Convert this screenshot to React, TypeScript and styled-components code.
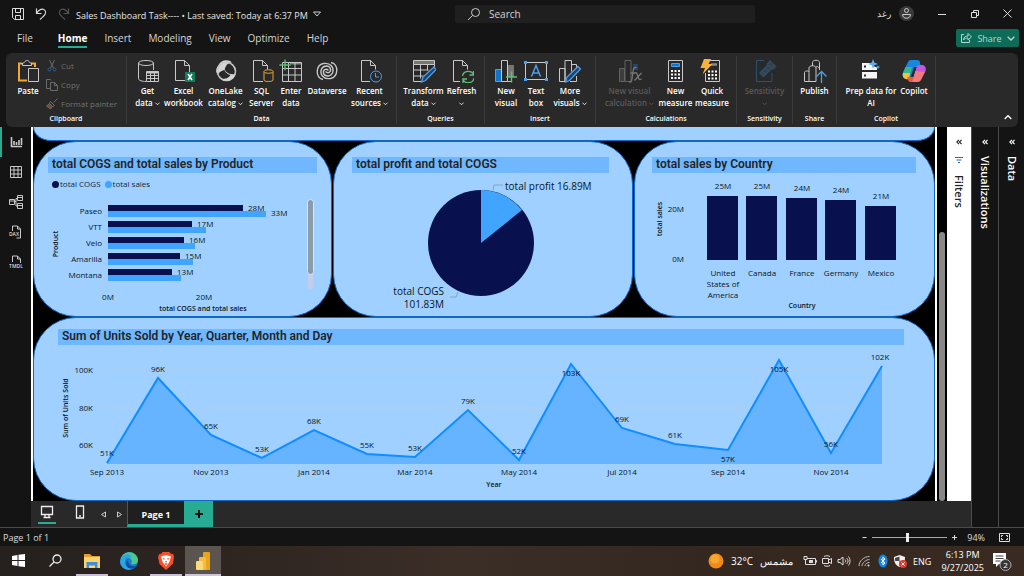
import React from 'react';
import styled, { createGlobalStyle, css } from 'styled-components';

const teal = '#27ab92';
const uiFont = `'Open Sans', 'Noto Sans', sans-serif`;

const GlobalStyle = createGlobalStyle`
  *, *::before, *::after { box-sizing: border-box; }
  body { margin: 0; background: #141414; color: #fff; font-family: ${uiFont}; font-size: 10px; }
  button, input { font: inherit; color: inherit; }
  svg { display: block; }
`;

const bareButton = css`
  border: 0;
  padding: 0;
  margin: 0;
  background: none;
  cursor: pointer;
`;

const Window = styled.div`
  display: flex;
  flex-direction: column;
  min-height: 100vh;
`;

/* ---------- title bar ---------- */

const TitleBar = styled.header`
  display: grid;
  grid-template-columns: 442fr 300px 255fr;
  column-gap: 2px;
  height: 27px;
  align-items: center;
  padding: 0 12px 0 11px;
`;

const FileSide = styled.div`
  display: flex;
  align-items: center;
  gap: 5px;
  white-space: nowrap;
`;

const QuickAccess = styled.div`
  display: flex;
  gap: 9px;
`;

const AccountSide = styled.div`
  display: flex;
  align-items: center;
  justify-content: flex-end;
  gap: 23px;
`;

const IconButton = styled.button`
  ${bareButton}
  display: grid;
  place-items: center;
  flex: none;
`;

const FileName = styled.span`
  font-size: 9px;
  line-height: 12px;
  color: #e6e6e6;
  padding-top: 4px;
`;

const SearchBox = styled.label`
  display: flex;
  align-items: center;
  gap: 8px;
  height: 18px;
  padding: 0 12px;
  background: #1f1f1f;
  border-radius: 2px;
`;

const SearchInput = styled.input`
  flex: 1;
  min-width: 0;
  border: 0;
  outline: 0;
  padding: 0;
  background: none;
  font-size: 10px;
  &::placeholder { color: #d4d4d4; opacity: 1; }
`;

const Account = styled.div`
  display: flex;
  align-items: center;
  gap: 8px;
  font-size: 9px;
  color: #ddd;
`;

/* ---------- menu ---------- */

const MenuBar = styled.div`
  display: flex;
  align-items: center;
  justify-content: space-between;
  height: 26px;
  padding: 0 5px 2px 17px;
`;

const MenuItems = styled.nav`
  display: flex;
  gap: 17px;
`;

const MenuItem = styled.button<{ $active?: boolean }>`
  ${bareButton}
  font-size: 10px;
  line-height: 16px;
  color: ${(p) => (p.$active ? '#fff' : '#d6d6d6')};
  font-weight: ${(p) => (p.$active ? 700 : 400)};
  border-bottom: 2px solid ${(p) => (p.$active ? teal : 'transparent')};
  &:first-child { margin-right: 8px; }
`;

const ShareButton = styled.button`
  ${bareButton}
  display: flex;
  align-items: center;
  justify-content: center;
  gap: 5px;
  width: 63px;
  height: 18px;
  margin-bottom: 2px;
  border-radius: 2px;
  background: #0d6b58;
  color: #b5d6cf;
  font-size: 9px;
`;

/* ---------- ribbon ---------- */

const Ribbon = styled.section`
  display: flex;
  height: 74px;
  margin: 0 6px;
  background: #292929;
  border-radius: 6px;
`;

const Group = styled.div<{ $width: number }>`
  display: flex;
  flex-direction: column;
  justify-content: space-between;
  align-items: center;
  width: ${(p) => p.$width}px;
  margin: 3px 0;
  border-right: 1px solid #3c3c3c;
`;

const GroupTools = styled.div`
  display: flex;
`;

const GroupName = styled.span`
  font-size: 7px;
  line-height: 10px;
  font-weight: 600;
`;

const Tool = styled.button<{ $width: number }>`
  ${bareButton}
  display: flex;
  flex-direction: column;
  align-items: center;
  gap: 2px;
  width: ${(p) => p.$width}px;
  padding-top: 3px;
  font-size: 8px;
  line-height: 12px;
  font-weight: 600;
  white-space: nowrap;
  &:disabled { color: #5a5a5a; }
`;

const ToolLine = styled.span`
  display: flex;
  align-items: center;
  justify-content: center;
  gap: 2px;
  height: 12px;
`;

const ClipList = styled.div`
  display: flex;
  flex-direction: column;
  padding-left: 5px;
`;

const ClipItem = styled.button`
  ${bareButton}
  display: flex;
  align-items: center;
  gap: 3px;
  height: 19px;
  font-size: 8px;
  white-space: nowrap;
  &:disabled { color: #727272; }
`;

const RibbonEnd = styled.div`
  flex: 1;
  display: flex;
  align-items: flex-end;
  justify-content: flex-end;
  padding: 0 6px 6px;
`;

/* ---------- workspace ---------- */

const Workspace = styled.div`
  display: flex;
  flex: 1;
`;

const Rail = styled.nav`
  width: 31px;
  flex: none;
`;

const RailButton = styled.button<{ $active?: boolean }>`
  ${bareButton}
  display: grid;
  place-items: center;
  width: 31px;
  height: 30px;
  padding-right: 2px;
  border-left: 2px solid ${(p) => (p.$active ? teal : 'transparent')};
`;

const RailText = styled.text`
  font: 600 5px ${uiFont};
  text-anchor: middle;
  fill: #ddd;
  stroke: none;
`;

const Middle = styled.div`
  display: flex;
  flex-direction: column;
  flex: 1;
  min-width: 0;
`;

const CanvasRow = styled.div`
  display: flex;
  flex: 1;
`;

const Dashboard = styled.main`
  flex: 1;
  min-width: 0;
  background: #000;
  border: solid #fff;
  border-width: 0 2px;
`;

const ScrollStrip = styled.div`
  display: flex;
  align-items: flex-end;
  justify-content: center;
  width: 10px;
  background: #000;
`;

const ScrollThumb = styled.div`
  width: 6px;
  height: 72%;
  border-radius: 3px;
  background: #8a8886;
`;

const cardSkin = css`
  background: #9fd0ff;
  border: 1px solid #1268c4;
`;

const TopCard = styled.div`
  ${cardSkin}
  height: 14px;
  border-top: 0;
  border-radius: 0 0 18px 18px / 0 0 14px 14px;
`;

const CardRow = styled.div`
  display: grid;
  grid-template-columns: 299fr 300fr 301fr;
  column-gap: 1px;
`;

const Card = styled.section<{ $top: number }>`
  ${cardSkin}
  border-radius: 43px;
  padding-top: ${(p) => p.$top}px;
  min-width: 0;
`;

const CardTitle = styled.h2<{ $left: number; $right: number }>`
  margin: 0 ${(p) => p.$right}px 0 ${(p) => p.$left}px;
  padding-left: 4px;
  height: 16px;
  background: #6fb8ff;
  color: #252423;
  font: 600 12px/15px Roboto, sans-serif;
  white-space: nowrap;
`;

const Legend = styled.div`
  display: flex;
  gap: 4px;
  margin: 5px 0 0 18px;
  font-size: 8px;
  line-height: 12px;
  color: #16263a;
`;

const LegendItem = styled.span<{ $color: string }>`
  display: flex;
  align-items: center;
  gap: 1px;
  &::before {
    content: '';
    width: 7px;
    height: 7px;
    border-radius: 50%;
    background: ${(p) => p.$color};
  }
`;

const Plot = styled.svg<{ $height: number }>`
  width: 100%;
  height: ${(p) => p.$height}px;
`;

const Mark = styled.text<{ $size?: number; $bold?: boolean; $anchor?: string }>`
  font-family: ${uiFont};
  font-size: ${(p) => p.$size ?? 8}px;
  font-weight: ${(p) => (p.$bold ? 600 : 400)};
  text-anchor: ${(p) => p.$anchor ?? 'middle'};
  fill: #0c1624;
`;

const Pane = styled.aside<{ $light?: boolean; $width: number }>`
  display: flex;
  flex-direction: column;
  align-items: center;
  width: ${(p) => p.$width}px;
  flex: none;
  padding-top: 12px;
  gap: 11px;
  background: ${(p) => (p.$light ? '#fff' : '#141414')};
  color: ${(p) => (p.$light ? '#252423' : '#fff')};
  border-left: ${(p) => (p.$light ? '0' : '1px solid #4a4a4a')};
`;

const PaneName = styled.span`
  writing-mode: vertical-rl;
  font-size: 11px;
  line-height: 16px;
  font-weight: 600;
`;

/* ---------- page tabs and status ---------- */

const TabBar = styled.div`
  display: flex;
  height: 26px;
  background: #292929;
`;

const ViewButton = styled.button<{ $active?: boolean }>`
  ${bareButton}
  width: 32px;
  display: flex;
  flex-direction: column;
  align-items: center;
  padding-top: 4px;
  gap: 3px;
  &::after {
    content: '';
    width: 18px;
    height: 2px;
    background: ${(p) => (p.$active ? teal : 'transparent')};
  }
`;

const StepButton = styled(IconButton)`
  width: 16px;
`;

const PageTab = styled.button`
  ${bareButton}
  width: 57px;
  padding-top: 3px;
  font-size: 9px;
  font-weight: 700;
  background: #1f1f1f;
  border-left: 1px solid #555;
  border-bottom: 3px solid ${teal};
`;

const AddTab = styled.button`
  ${bareButton}
  display: grid;
  place-items: center;
  width: 29px;
  background: ${teal};
`;

const StatusBar = styled.footer`
  display: flex;
  align-items: center;
  justify-content: space-between;
  height: 19px;
  padding: 0 14px 0 3px;
  border-top: 1px solid #4a4a4a;
  color: #ddd;
  font-size: 9px;
`;

const ZoomTools = styled.div`
  display: flex;
  align-items: center;
  gap: 5px;
`;

const ZoomRange = styled.input`
  appearance: none;
  width: 75px;
  height: 10px;
  margin: 0;
  background: linear-gradient(#aaa, #aaa) center / 100% 1px no-repeat;
  &::-webkit-slider-thumb {
    appearance: none;
    width: 3px;
    height: 9px;
    background: #eee;
  }
`;

const ZoomValue = styled.output`
  margin: 0 9px 0 5px;
`;

/* ---------- task bar ---------- */

const TaskBar = styled.div`
  display: flex;
  justify-content: space-between;
  height: 30px;
  background: linear-gradient(90deg, #26211e 0%, #2d2420 20%, #3b2e27 45%, #33271f 70%, #3a2b22 100%);
`;

const TaskSide = styled.div`
  display: flex;
  align-items: center;
`;

const TaskButton = styled.button<{ $open?: boolean; $active?: boolean }>`
  ${bareButton}
  display: grid;
  place-items: center;
  align-self: stretch;
  width: 36px;
  margin-right: 1px;
  padding-top: 1px;
  background: ${(p) => (p.$active ? '#5b544f' : 'transparent')};
  border-bottom: 2px solid transparent;
  border-image: ${(p) =>
    p.$active
      ? 'linear-gradient(#cfc6dc, #cfc6dc) 1'
      : p.$open
        ? 'linear-gradient(90deg, transparent 8%, #c9bfd8 8%, #c9bfd8 92%, transparent 92%) 1'
        : 'none'};
`;

const Weather = styled.div`
  display: flex;
  align-items: center;
  gap: 7px;
  font-size: 10px;
  margin-right: 10px;
`;

const Tray = styled.div`
  display: flex;
  align-items: center;
  gap: 4px;
`;

const Language = styled.span`
  font-size: 9px;
  margin: 0 10px 0 6px;
`;

const Clock = styled.time`
  font-size: 9px;
  line-height: 13px;
  text-align: center;
  margin-right: 8px;
`;

const Notices = styled(IconButton)`
  margin-right: 12px;
`;

const BadgeText = styled.text`
  font: 400 8px ${uiFont};
  text-anchor: middle;
  fill: #fff;
`;

/* ---------- icons ---------- */

type IconProps = { size?: number; w?: number; color?: string; sw?: number; children: React.ReactNode; box?: string };
const Icon = ({ size = 24, w, color = '#c8c8c8', sw = 1, box = '0 0 24 24', children }: IconProps) => (
  <svg width={w ?? size} height={size} viewBox={box} fill="none" stroke={color} strokeWidth={sw} aria-hidden="true">
    {children}
  </svg>
);

const Chevron = ({ up, size = 5 }: { up?: boolean; size?: number }) => (
  <svg width={size} height={size} viewBox="0 0 6 6" fill="none" stroke="currentColor" strokeWidth="1" aria-hidden="true">
    <path d={up ? 'M.5 4.5 3 2l2.5 2.5' : 'M.5 2 3 4.5 5.5 2'} />
  </svg>
);

const Collapse = () => (
  <svg width="6" height="6" viewBox="0 0 7 7" fill="none" stroke="currentColor" strokeWidth="1.3" aria-hidden="true">
    <path d="M3.5 1 1 3.5 3.5 6M6.5 1 4 3.5 6.5 6" />
  </svg>
);

const sheet = 'M3.5 1.5h9l5 5v15h-14zM12.5 1.5v5h5';
const blue = '#4f9ee8';

const icons = {
  paste: (
    <Icon>
      <path d="M6 4.5H3v17h8M15 4.5h4V8" stroke="#f0a830" strokeWidth="2" />
      <path d="M6.5 6.5V4s2 0 2.2-1c.5-2 4-2 4.6 0 .2 1 2.2 1 2.2 1v2.5zM12.5 9.5h10v13h-10z" fill="#292929" />
    </Icon>
  ),
  getData: (
    <Icon>
      <ellipse cx="10" cy="4" rx="7.5" ry="2.5" />
      <path d="M2.5 4v15.5c0 2 4 3 7.5 3M17.5 4v7" />
      <path d="M10.5 12.5h12v10h-12zM10.5 16.5h12M10.5 19.5h12M14.5 14v8.5M18.5 14v8.5" />
      <path d="M11 13.5h11" strokeWidth="2" />
    </Icon>
  ),
  excel: (
    <Icon>
      <path d={sheet} />
      <path d="M13 13h10v10H13z" fill="#107c5a" stroke="none" />
      <path d="m16 15 4 6M20 15l-4 6" stroke="#fff" strokeWidth="1.5" />
    </Icon>
  ),
  oneLake: (
    <Icon>
      <path d="M4.5 6C7 0 15 0 18 3.5c-4-.5-6.5 3.5-7.5 7.5-3 .5-6 2.5-6.5 5C1 13 2 9 4.5 6z" fill="#d5d5d5" stroke="none" />
      <circle cx="12.5" cy="12.5" r="9" strokeWidth="1.5" />
      <path d="M10.5 8c0 5 4 8 11 7-2 6-8 8.5-14 5 4 0 7-1 9-4-4-1-7-4-6-8z" fill="#d5d5d5" stroke="none" />
    </Icon>
  ),
  sql: (
    <Icon>
      <path d="M13 22.5H3.5v-21h9l5 5v4M12.5 1.5v5h5" />
      <g stroke="#e8a93c" fill="#292929">
        <path d="M14 12.5V21c0 2 9 2 9 0v-8.5" />
        <ellipse cx="18.5" cy="12.5" rx="4.5" ry="1.8" />
      </g>
    </Icon>
  ),
  enter: (
    <Icon>
      <path d="M3.5 3.5h19v19h-19zM3.5 9.5h19M3.5 16h19M9.5 3.5v19M16 3.5v19" />
      <path d="M11 4.5h11" strokeWidth="2" opacity=".6" />
      <path d="M6 .5v11M.5 6h11" stroke="#5fbf77" strokeWidth="1.3" />
    </Icon>
  ),
  dataverse: (
    <Icon sw={1.4}>
      <path d="M8 20.5C0 19 .5 6 8.5 4.5c7-1 11 4 9 9.5-2 4-8 4-9 0-.8-3 2.5-5 5-2.5" />
      <path d="M16 3.5c8 1.5 7.5 14.5-.5 16-7 1-11-4-9-9.5 2-4 8-4 9 0 .8 3-2.5 5-5 2.5" />
    </Icon>
  ),
  recent: (
    <Icon>
      <path d="M12 22.5H3.5v-21h9l5 5v4M12.5 1.5v5h5" />
      <circle cx="18" cy="17.5" r="5.5" stroke={blue} />
      <path d="M17.5 14v4H21" stroke={blue} />
    </Icon>
  ),
  transform: (
    <Icon>
      <path d="M1.5 1.5h21v4h-21z" fill="#77756f" />
      <path d="M1.5 5.5v17h8M1.5 11h15M1.5 17h10M8.5 5.5v14M15.5 5.5v6M22.5 5.5v3" />
      <path d="m9.5 23 1.5-5L22 8l2 2.500-10.500 11z" stroke={blue} fill="#1d456c" strokeWidth="1.3" />
    </Icon>
  ),
  refresh: (
    <Icon>
      <path d="M10 22.5H3.5v-21h9l5 5v4M12.5 1.5v5h5" />
      <path d="M12.5 17c1-6 9-6 11-1.500M23.5 12v4h-4M24 19c-1 6-9 6-11 1.500M13 24v-4h4" stroke="#5fbf77" strokeWidth="1.3" />
    </Icon>
  ),
  newVisual: (
    <Icon>
      <path d="M14 6h6v12h-6z" fill="#77756f" stroke="none" />
      <path d="M1.5 10.5h6v12h-6z" fill="#1173c9" stroke={blue} />
      <path d="M7.5 1.5h6v21h-6z" />
      <path d="M13.5 22.5H17" />
      <path d="M17.5 12.5v11M12 18h11" stroke="#5fbf77" strokeWidth="1.4" />
    </Icon>
  ),
  textBox: (
    <Icon>
      <path d="M1.5 3.5h21v17h-21z" />
      <path d="m7.5 17.5 4.5-11 4.5 11M9 14h6" stroke={blue} strokeWidth="1.5" />
      <path d="M0 2h3v3H0zM21 2h3v3h-3zM0 19h3v3H0zM21 19h3v3h-3z" fill={blue} stroke="none" />
    </Icon>
  ),
  moreVisuals: (
    <Icon>
      <path d="M1.5 9.5H7v13H1.5zM7 22.5v-21h6.5v11M13.5 5.5h5v4M18.5 17v5.5H12" />
      <path d="m7.5 23 1.5-5L20 7.5l2.5 2.5-11 11.5z" stroke={blue} fill="#1d456c" strokeWidth="1.3" />
    </Icon>
  ),
  visualCalc: (
    <Icon color="#626262">
      <path d="M1.5 9.5h5v13h-5z" fill="#3d3d3d" />
      <path d="M7 1.5h6v21H7z" />
      <path d="M15 5h5v6h-5z" fill="#24446b" stroke="none" />
      <path d="M18.5 9c-2-1.500-3 0-3.200 2l-1.500 10c-.3 2-1.500 2.500-3 1.500M12.5 14h5M17 14c2-1 2 1 3 4s2 3 3.5 2M23.5 14l-7 7.5" strokeWidth="1.3" stroke="#777" />
    </Icon>
  ),
  newMeasure: (
    <Icon>
      <path d="M4.500 1.5h14v21h-14z" />
      <path d="M7.500 4.5h8v3h-8z" fill="#1173c9" stroke={blue} />
      <path d="M7 12h2M10.500 12h2M14 12h2M7 15.5h2M10.500 15.5h2M14 15.5h2M7 19h2M10.500 19h2M14 19h2" stroke="#fff" strokeWidth="2" />
    </Icon>
  ),
  quick: (
    <Icon>
      <path d="M10 1.5h9.5v21h-14V14" />
      <path d="M11 5.5h6" strokeWidth="2.5" stroke="#888" />
      <path d="M8 12.5h2M11.5 12.5h2M15 12.5h2M8 16h2M11.5 16h2M15 16h2M8 19.5h2M11.5 19.5h2M15 19.5h2" stroke="#fff" strokeWidth="2" />
      <path d="M4 0h7L8.5 5h4l-10 10.5L5 9H.5z" fill="#f7b23b" stroke="none" />
    </Icon>
  ),
  sensitivity: (
    <Icon color="#2c516f">
      <path d="M11 1.5H3.5v21H19V14" />
      <path d="m7 14 8-8 3.5 3.5-8 8zM9 12l3.5 3.5M12 9l3.5 3.5" strokeWidth="1.3" fill="#33414d" />
      <path d="m14 5 3-3.500 6 6-3 3zM17.5 2l-2 3M22 6l-3 2.5" fill="#33414d" />
    </Icon>
  ),
  publish: (
    <Icon>
      <path d="M13 22.5H1.5v-9c0-2 4.5-2 4.5 0v9M6 13V9c0-3 7-3 7 0v13.5M9.5 7V3.5c0-3 7-3 7 0V11M13 8c2-1 3 0 3.5 2" />
      <path d="M18.5 24V13M13.5 17.5l5-5 5 5" stroke={blue} strokeWidth="1.3" />
    </Icon>
  ),
  prep: (
    <Icon>
      <path d="M3 4h9l2 3 4 1.500V11H3zM3 13h15v6.500H3z" fill="#f5f5f5" stroke="none" />
      <path d="M5 7.5h2M5 16.5h2" stroke="#292929" strokeWidth="2" />
      <path d="m14 0 1.300 3.500L19 5l-3.700 1.300L14 10l-1.300-3.700L9 5l3.700-1.500zM19 6l.6 1.500 1.700.6-1.700.6-.6 1.800-.6-1.800-1.700-.6 1.700-.6z" fill="#5cb0f5" stroke="none" />
    </Icon>
  ),
  copilot: (
    <Icon>
      <g stroke="none">
        <path d="M6 3c1-2 2-2 4-2h5c2 0 3 1 3 3l1 4h-7L9 17c-1 3-2 3-5 3-3-1-4-4-3-7z" fill="#1687dc" />
        <path d="M3.5 8H10L7 19c-2 2-6 0-6.500-3z" fill="#35b88a" />
        <path d="M1 14h7l-1 6c-4 1-7-1-6-6z" fill="#f5c13d" />
        <path d="M18 21c-1 2-2 2-4 2H9c-2 0-3-1-3-3l-.5-2h6L15 7c1-1 3-1 5-1 3 0 4.500 3 3.500 6z" fill="#c25ae0" />
        <path d="m13.500 12 9.500 1-4 8c-1 2-3 2-5 2h-4z" fill="#f27c7c" />
        <path d="M5.500 18H12l-2 5c-3 0-3.500-1-4-3z" fill="#ef5b35" />
      </g>
    </Icon>
  ),
};

/* ---------- ribbon content ---------- */

type ToolSpec = { icon: React.ReactNode; width: number; lines: string[]; menu?: boolean; off?: boolean };

const groups: { name: string; width: number; tools: ToolSpec[] }[] = [
  {
    name: 'Data',
    width: 270,
    tools: [
      { icon: icons.getData, width: 32, lines: ['Get', 'data'], menu: true },
      { icon: icons.excel, width: 40, lines: ['Excel', 'workbook'] },
      { icon: icons.oneLake, width: 44, lines: ['OneLake', 'catalog'], menu: true },
      { icon: icons.sql, width: 28, lines: ['SQL', 'Server'] },
      { icon: icons.enter, width: 31, lines: ['Enter', 'data'] },
      { icon: icons.dataverse, width: 41, lines: ['Dataverse'] },
      { icon: icons.recent, width: 44, lines: ['Recent', 'sources'], menu: true },
    ],
  },
  {
    name: 'Queries',
    width: 88,
    tools: [
      { icon: icons.transform, width: 42, lines: ['Transform', 'data'], menu: true },
      { icon: icons.refresh, width: 34, lines: ['Refresh', ''], menu: true },
    ],
  },
  {
    name: 'Insert',
    width: 111,
    tools: [
      { icon: icons.newVisual, width: 28, lines: ['New', 'visual'] },
      { icon: icons.textBox, width: 32, lines: ['Text', 'box'] },
      { icon: icons.moreVisuals, width: 36, lines: ['More', 'visuals'], menu: true },
    ],
  },
  {
    name: 'Calculations',
    width: 141,
    tools: [
      { icon: icons.visualCalc, width: 56, lines: ['New visual', 'calculation'], menu: true, off: true },
      { icon: icons.newMeasure, width: 36, lines: ['New', 'measure'] },
      { icon: icons.quick, width: 37, lines: ['Quick', 'measure'] },
    ],
  },
  {
    name: 'Sensitivity',
    width: 56,
    tools: [{ icon: icons.sensitivity, width: 50, lines: ['Sensitivity', ''], menu: true, off: true }],
  },
  { name: 'Share', width: 44, tools: [{ icon: icons.publish, width: 40, lines: ['Publish'] }] },
  {
    name: 'Copilot',
    width: 99,
    tools: [
      { icon: icons.prep, width: 56, lines: ['Prep data for', 'AI'] },
      { icon: icons.copilot, width: 30, lines: ['Copilot'] },
    ],
  },
];

const RibbonTool = ({ tool }: { tool: ToolSpec }) => (
  <Tool $width={tool.width} disabled={tool.off}>
    {tool.icon}
    <span>
      {tool.lines.map((line, i) => (
        <ToolLine key={line}>
          {line}
          {tool.menu && i === tool.lines.length - 1 && <Chevron />}
        </ToolLine>
      ))}
    </span>
  </Tool>
);

/* ---------- charts ---------- */

const navy = '#08104e';
const sky = '#41a4ff';
const gridLine = '#b4cfe6';

const products = [
  { name: 'Paseo', cogs: 28.1, sales: 33, label: '28M' },
  { name: 'VTT', cogs: 17.5, sales: 20.4, label: '17M' },
  { name: 'Velo', cogs: 15.9, sales: 18.2, label: '16M' },
  { name: 'Amarilla', cogs: 15, sales: 17.7, label: '15M' },
  { name: 'Montana', cogs: 13.3, sales: 15.3, label: '13M' },
];

const ProductChart = () => {
  const x0 = 74;
  const perMillion = 4.79;
  return (
    <Plot $height={126} viewBox="0 0 297 126" role="img" aria-label="total COGS and total sales by Product">
      <path d="M74.5 10v86M169.5 10v86" stroke={gridLine} strokeDasharray="1 3" />
      {products.map((p, i) => {
        const y = 15 + i * 16;
        return (
          <g key={p.name}>
            <rect x={x0} y={y} width={Math.round(p.cogs * perMillion)} height={6} fill={navy} />
            <rect x={x0} y={y + 6} width={Math.round(p.sales * perMillion)} height={6} fill={sky} />
            <Mark x={68} y={y + 9} $anchor="end">{p.name}</Mark>
            <Mark x={x0 + Math.round(p.cogs * perMillion) + 5} y={y + 6} $anchor="start">{p.label}</Mark>
          </g>
        );
      })}
      <Mark x={237} y={26} $anchor="start">33M</Mark>
      <Mark x={74} y={110}>0M</Mark>
      <Mark x={170} y={110}>20M</Mark>
      <Mark x={169} y={121} $size={7} $bold>total COGS and total sales</Mark>
      <Mark transform="translate(24 54) rotate(-90)" $size={7} $bold>Product</Mark>
      <rect x="274" y="80" width="5" height="19" rx="2" fill="#c3cdec" />
      <rect x="273.5" y="9.5" width="6" height="75" rx="3" fill="#8d9ba8" stroke="#d7e6f5" />
    </Plot>
  );
};

const ProfitChart = () => (
  <Plot $height={143} viewBox="0 0 298 143" role="img" aria-label="total profit and total COGS">
    <circle cx="147" cy="70" r="53" fill={navy} />
    <path d="M147 70V17a53 53 0 0 1 41 20z" fill={sky} />
    <path d="M159 17l1-5h9M116 124h6l2-5" fill="none" stroke="#8aa6c0" />
    <Mark x={171} y={17} $size={10} $anchor="start">total profit 16.89M</Mark>
    <Mark x={110} y={122} $size={10} $anchor="end">total COGS</Mark>
    <Mark x={110} y={135} $size={10} $anchor="end">101.83M</Mark>
  </Plot>
);

const countries = [
  { lines: ['United', 'States of', 'America'], label: '25M', h: 64 },
  { lines: ['Canada'], label: '25M', h: 64 },
  { lines: ['France'], label: '24M', h: 62 },
  { lines: ['Germany'], label: '24M', h: 60 },
  { lines: ['Mexico'], label: '21M', h: 54 },
];

const CountryChart = () => (
  <Plot $height={143} viewBox="0 0 299 143" role="img" aria-label="total sales by Country">
    <path d="M57 36.5h220M57 86.5h220" stroke={gridLine} strokeDasharray="1 3" />
    {countries.map((c, i) => {
      const mid = 88 + Math.round(i * 39.4);
      return (
        <g key={c.lines[0]}>
          <rect x={mid - 16} y={87 - c.h} width={31} height={c.h} fill={navy} />
          <Mark x={mid} y={80 - c.h}>{c.label}</Mark>
          {c.lines.map((l, n) => (
            <Mark key={l} x={mid} y={103 + n * 11}>{l}</Mark>
          ))}
        </g>
      );
    })}
    <Mark x={49} y={39} $anchor="end">20M</Mark>
    <Mark x={49} y={89} $anchor="end">0M</Mark>
    <Mark x={167} y={135} $size={7} $bold>Country</Mark>
    <Mark transform="translate(27 46) rotate(-90)" $size={7} $bold>total sales</Mark>
  </Plot>
);

const units: { x: number; y: number; label: string; dy?: number; dx?: number }[] = [
  { x: 73, y: 118, label: '51K', dy: -7 },
  { x: 124, y: 33, label: '96K' },
  { x: 177, y: 90, label: '65K' },
  { x: 228, y: 113, label: '53K' },
  { x: 280, y: 85, label: '68K' },
  { x: 333, y: 109, label: '55K' },
  { x: 381, y: 112, label: '53K' },
  { x: 434, y: 65, label: '79K' },
  { x: 485, y: 115, label: '52K' },
  { x: 537, y: 19, label: '103K', dy: 12 },
  { x: 588, y: 83, label: '69K' },
  { x: 641, y: 99, label: '61K' },
  { x: 694, y: 105, label: '57K', dy: 12 },
  { x: 745, y: 15, label: '105K', dy: 12 },
  { x: 797, y: 108, label: '56K' },
  { x: 848, y: 21, label: '102K', dx: -2 },
];

const months = ['Sep 2013', 'Nov 2013', 'Jan 2014', 'Mar 2014', 'May 2014', 'Jul 2014', 'Sep 2014', 'Nov 2014'];

const UnitsChart = () => {
  const line = units.map((u) => `${u.x},${u.y}`).join(' ');
  return (
    <Plot $height={155} viewBox="0 0 900 155" role="img" aria-label="Sum of Units Sold by month">
      <path d="M66 25.5h784M66 63.5h784M66 100.5h784" stroke={gridLine} strokeDasharray="1 3" />
      {months.map((m, i) => (
        <path key={m} d={`M${units[i * 2].x} 8v111`} stroke={gridLine} strokeDasharray="1 3" />
      ))}
      <polygon points={`73,119 ${line} 848,119`} fill="#66b3ff" />
      <polyline points={line} fill="none" stroke="#118dff" strokeWidth="2" />
      {units.map((u) => (
        <Mark key={u.x} x={u.x + (u.dx ?? 0)} y={u.y + (u.dy ?? -6)}>{u.label}</Mark>
      ))}
      {months.map((m, i) => (
        <Mark key={m} x={units[i * 2].x} y={130}>{m}</Mark>
      ))}
      <Mark x={59} y={28} $anchor="end">100K</Mark>
      <Mark x={59} y={66} $anchor="end">80K</Mark>
      <Mark x={59} y={103} $anchor="end">60K</Mark>
      <Mark x={460} y={142} $size={7} $bold>Year</Mark>
      <Mark transform="translate(34 63) rotate(-90)" $size={7} $bold>Sum of Units Sold</Mark>
    </Plot>
  );
};

/* ---------- page ---------- */

export default function App() {
  return (
    <Window>
      <GlobalStyle />
      <TitleBar>
        <FileSide>
          <QuickAccess>
            <IconButton aria-label="Save">
              <Icon size={14} box="0 0 14 14" color="#ddd">
                <path d="M1.5 1.5h11v11h-9l-2-2zM4.5 1.5v4h5v-4M4.5 12.5v-4h5v4" />
              </Icon>
            </IconButton>
            <IconButton aria-label="Undo">
              <Icon size={14} box="0 0 14 14" color="#ddd" sw={1.2}>
                <path d="M2.5 1.5v5h5M2.5 6.5C5 2 9 1 11 3.5s0 4.5-5 9" />
              </Icon>
            </IconButton>
            <IconButton aria-label="Redo">
              <Icon size={14} box="0 0 14 14" color="#555" sw={1.2}>
                <path d="M11.5 1.5v5h-5M11.5 6.5C9 2 5 1 3 3.5s0 4.5 5 9" />
              </Icon>
            </IconButton>
          </QuickAccess>
          <FileName>Sales Dashboard Task---- • Last saved: Today at 6:37 PM</FileName>
          <IconButton aria-label="File details">
            <Icon size={6} w={8} box="0 0 8 6" color="#ccc">
              <path d="M.5 1h7L4 5z" />
            </Icon>
          </IconButton>
        </FileSide>
        <SearchBox>
          <Icon size={14} box="0 0 14 14" color="#ccc">
            <circle cx="8.5" cy="5.5" r="4" />
            <path d="M5.5 8.5 1 13" />
          </Icon>
          <SearchInput placeholder="Search" aria-label="Search" />
        </SearchBox>
        <AccountSide>
          <Account>
            <span lang="ar">رغد</span>
            <Icon size={15} box="0 0 15 15" color="#ccc">
              <circle cx="7.5" cy="7.5" r="7.5" fill="#3a3a3a" stroke="none" />
              <circle cx="7.5" cy="4.5" r="2" />
              <path d="M3.5 8.5h8c0 5-8 5-8 0z" />
            </Icon>
          </Account>
          <IconButton aria-label="Minimize">
            <Icon size={10} box="0 0 10 10" color="#ddd"><path d="M1 5.5h8" /></Icon>
          </IconButton>
          <IconButton aria-label="Restore">
            <Icon size={10} box="0 0 10 10" color="#ddd">
              <path d="M1.5 3.5h5v5h-5zM3.5 3.5v-2h5v5h-2" />
            </Icon>
          </IconButton>
          <IconButton aria-label="Close">
            <Icon size={9} box="0 0 9 9" color="#ddd"><path d="m.5.5 8 8M8.5.5l-8 8" /></Icon>
          </IconButton>
        </AccountSide>
      </TitleBar>

      <MenuBar>
        <MenuItems>
          {['File', 'Home', 'Insert', 'Modeling', 'View', 'Optimize', 'Help'].map((m) => (
            <MenuItem key={m} $active={m === 'Home'}>{m}</MenuItem>
          ))}
        </MenuItems>
        <ShareButton>
          <Icon size={12} box="0 0 12 12" color="#b5d6cf">
            <path d="M4 2.5H1.5v8h8V8M3.5 8c0-3 2-4 4.5-4V1.5L11.500 5 8 8V6C6 6 4.5 6.5 3.5 8z" />
          </Icon>
          Share
          <Chevron size={8} />
        </ShareButton>
      </MenuBar>

      <Ribbon>
        <Group $width={121}>
          <GroupTools>
            <Tool $width={26}>
              {icons.paste}
              Paste
            </Tool>
            <ClipList>
              <ClipItem disabled>
                <Icon size={12} box="0 0 12 12" color="#6b6b6b">
                  <path d="m3.5 0 4 8M8.5 0l-4 8" />
                  <circle cx="3.5" cy="9.5" r="1.5" stroke="#2f5f8c" />
                  <circle cx="8.5" cy="9.5" r="1.5" stroke="#2f5f8c" />
                </Icon>
                Cut
              </ClipItem>
              <ClipItem disabled>
                <Icon size={12} box="0 0 12 12" color="#6b6b6b">
                  <path d="M4 9.5H.5v-9h4l1 1M4.5 3.5h4l3 3v5h-7zM8.5 3.5v3h3" />
                </Icon>
                Copy
              </ClipItem>
              <ClipItem disabled>
                <Icon size={12} box="0 0 12 12" color="#6b6b6b">
                  <path d="m11.5.5-4 4M4.5 3.5l4 4-2 1-3-3z" />
                  <path d="M3.5 5.5.5 8l4 3 2-2.5z" fill="#7a4b35" />
                </Icon>
                Format painter
              </ClipItem>
            </ClipList>
          </GroupTools>
          <GroupName>Clipboard</GroupName>
        </Group>
        {groups.map((g) => (
          <Group key={g.name} $width={g.width}>
            <GroupTools>
              {g.tools.map((t) => (
                <RibbonTool key={t.lines.join(' ')} tool={t} />
              ))}
            </GroupTools>
            <GroupName>{g.name}</GroupName>
          </Group>
        ))}
        <RibbonEnd>
          <IconButton aria-label="Collapse ribbon"><Chevron up size={8} /></IconButton>
        </RibbonEnd>
      </Ribbon>

      <Workspace>
        <Rail>
          <RailButton $active aria-label="Report view">
            <Icon size={14} box="0 0 14 14">
              <path d="M2.500 2v9.500H13M5 10V6M7.500 10V7M10 10V5M12.500 10V3" strokeWidth="1.6" />
            </Icon>
          </RailButton>
          <RailButton aria-label="Table view">
            <Icon size={14} box="0 0 14 14">
              <path d="M1.5 1.5h11v11h-11zM1.5 5h11M1.5 9h11M5 1.5v11M9 1.5v11" />
            </Icon>
          </RailButton>
          <RailButton aria-label="Model view">
            <Icon size={14} box="0 0 14 14">
              <path d="M.5 4.5h5v5h-5zM.5 6h5M8.5.5h5v5h-5zM8.5 2.5h5M8.5 8.5h5v5h-5zM8.5 10.5h5M5.5 6.5H7v-3h1.500M7 6.5V11h1.500" />
            </Icon>
          </RailButton>
          <RailButton aria-label="DAX query view">
            <Icon size={14} box="0 0 14 14">
              <path d="M3.5 6V1h5l3 3v9h-4M8.5 1v3h3" />
              <RailText x="5" y="11">DAX</RailText>
            </Icon>
          </RailButton>
          <RailButton aria-label="TMDL view">
            <Icon size={14} box="0 0 14 14">
              <path d="M3.5 7V1h5l3 3v4M8.5 1v3h3" />
              <RailText x="7" y="13">TMDL</RailText>
            </Icon>
          </RailButton>
        </Rail>

        <Middle>
          <CanvasRow>
            <Dashboard>
              <TopCard />
              <CardRow>
                <Card $top={15}>
                  <CardTitle $left={14} $right={14}>total COGS and total sales by Product</CardTitle>
                  <Legend>
                    <LegendItem $color={navy}>total COGS</LegendItem>
                    <LegendItem $color={sky}>total sales</LegendItem>
                  </Legend>
                  <ProductChart />
                </Card>
                <Card $top={15}>
                  <CardTitle $left={18} $right={23}>total profit and total COGS</CardTitle>
                  <ProfitChart />
                </Card>
                <Card $top={15}>
                  <CardTitle $left={17} $right={18}>total sales by Country</CardTitle>
                  <CountryChart />
                </Card>
              </CardRow>
              <Card $top={11}>
                <CardTitle $left={24} $right={30}>Sum of Units Sold by Year, Quarter, Month and Day</CardTitle>
                <UnitsChart />
              </Card>
            </Dashboard>
            <ScrollStrip><ScrollThumb /></ScrollStrip>
            <Pane $light $width={24}>
              <Collapse />
              <Icon size={8} box="0 0 8 8" color="#2b6cb0"><path d="M0 1.5h8M1.5 4h5M3 6.5h2" /></Icon>
              <PaneName>Filters</PaneName>
            </Pane>
          </CanvasRow>
          <TabBar>
            <ViewButton $active aria-label="Desktop layout">
              <Icon size={14} box="0 0 14 14" color="#eee" sw={1.3}>
                <path d="M1.5 1.5h11v8h-11zM5 9.5v3M9 9.5v3M3.5 12.5h7" />
              </Icon>
            </ViewButton>
            <ViewButton aria-label="Mobile layout">
              <Icon size={14} box="0 0 14 14" color="#eee" sw={1.3}>
                <path d="M4.500 1h7v12h-7zM7 11h2" />
              </Icon>
            </ViewButton>
            <StepButton aria-label="Previous page">
              <Icon size={7} w={5} box="0 0 5 7" color="#ccc"><path d="M4.5 1v5l-4-2.5z" /></Icon>
            </StepButton>
            <StepButton aria-label="Next page">
              <Icon size={7} w={5} box="0 0 5 7" color="#ccc"><path d="M.5 1v5l4-2.5z" /></Icon>
            </StepButton>
            <PageTab>Page 1</PageTab>
            <AddTab aria-label="New page">
              <Icon size={8} box="0 0 8 8" color="#111" sw={2}><path d="M4 0v8M0 4h8" /></Icon>
            </AddTab>
          </TabBar>
        </Middle>

        <Pane $width={27}>
          <Collapse />
          <PaneName>Visualizations</PaneName>
        </Pane>
        <Pane $width={26}>
          <Collapse />
          <PaneName>Data</PaneName>
        </Pane>
      </Workspace>

      <StatusBar>
        <span>Page 1 of 1</span>
        <ZoomTools>
          <IconButton aria-label="Zoom out">
            <Icon size={5} box="0 0 5 5" color="#ddd"><path d="M.5 2.5h4" /></Icon>
          </IconButton>
          <ZoomRange type="range" min={10} max={188} defaultValue={94} aria-label="Zoom" />
          <IconButton aria-label="Zoom in">
            <Icon size={5} box="0 0 5 5" color="#ddd"><path d="M0 2.5h5M2.5 0v5" /></Icon>
          </IconButton>
          <ZoomValue>94%</ZoomValue>
          <IconButton aria-label="Fit to page">
            <Icon size={9} w={11} box="0 0 11 9" color="#ddd">
              <path d="M.5.5h10v8H.5zM2.5 4V2.5H4M7 2.5h1.5V4M8.5 5v1.5H7M4 6.5H2.5V5" />
            </Icon>
          </IconButton>
        </ZoomTools>
      </StatusBar>

      <TaskBar>
        <TaskSide>
          <TaskButton aria-label="Start">
            <Icon size={13} box="0 0 13 13" color="none">
              <path d="m0 2 5.5-1v5H0zM6.5.8 13 0v6H6.5zM0 7h5.5v5L0 11zM6.5 7H13v6l-6.5-.8z" fill="#fff" />
            </Icon>
          </TaskButton>
          <TaskButton aria-label="Search Windows">
            <Icon size={13} box="0 0 13 13" color="#eee" sw={1.3}>
              <circle cx="8" cy="5" r="4" />
              <path d="M5 8 .5 12.5" />
            </Icon>
          </TaskButton>
          <TaskButton $open aria-label="File Explorer">
            <Icon size={16} w={18} box="0 0 18 16" color="none">
              <path d="M1 1h6l2 2h8v12H1z" fill="#e0a12e" />
              <path d="M1 4h16v11H1z" fill="#fcd46c" />
              <path d="M3.5 9h11v6H12v-2.5H6V15H3.5z" fill="#3f8ede" />
            </Icon>
          </TaskButton>
          <TaskButton aria-label="Edge">
            <Icon size={18} box="0 0 18 18" color="none">
              <circle cx="9" cy="9" r="9" fill="#1a7fd0" />
              <path d="M1 7C3-2 17-2 18 8c0 4-4 5-7 4 3-5-3-9-10-5z" fill="#4dc790" />
              <path d="M1 7c3-6 10-6 11-1-4-2-7 0-7 4 0 5 5 7 10 5-5 5-14 3-15-5z" fill="#2da4e4" />
              <path d="M8 8c-5 4 0 11 7 8 2-1 2-3 0-2-4 1-7-2-7-6z" fill="#0f4f9c" />
            </Icon>
          </TaskButton>
          <TaskButton $open aria-label="Brave">
            <Icon size={18} w={16} box="0 0 16 18" color="none">
              <path d="M4.5 0h7L13 2l2-.2 1 3-1 7L8 18l-6.500-6L0 5l1.200-3L3 2z" fill="#f4502a" />
              <path d="M3 4.5 8 3l5 1.500-1.500 5L10 12l-2 2.500L6 12 4.500 9.500z" fill="#fff" />
              <path d="m4.500 6 2.500.5-1 1.500zM11.500 6 9 6.500l1 1.500zM7 9h2l-1 2zM6 12l2-1 2 1-2 1z" fill="#f4502a" />
            </Icon>
          </TaskButton>
          <TaskButton $active aria-label="Power BI">
            <Icon size={18} w={16} box="0 0 16 18" color="none">
              <rect x="8" y="0" width="7" height="18" rx="1" fill="#e8a51c" />
              <rect x="4" y="5" width="7" height="13" rx="1" fill="#f3bd3e" />
              <rect x="1" y="9" width="7" height="9" rx="1" fill="#fbda7b" />
            </Icon>
          </TaskButton>
        </TaskSide>
        <TaskSide>
          <Weather>
            <Icon size={16} box="0 0 16 16" color="none">
              <circle cx="8" cy="8" r="7.5" fill="#f08a1d" />
              <circle cx="7" cy="6" r="4.5" fill="#f6a72e" />
            </Icon>
            <span>32°C</span>
            <span lang="ar">مشمس</span>
          </Weather>
          <Tray>
            <Icon size={12} w={14} box="0 0 14 12" color="#ddd">
              <path d="M4 3.5h8.500v6H2.500V7M12.500 5.500h1v2M1 1.500h3v3H1zM2.500 4.500V7" />
              <path d="M6 5h4v3H6z" fill="#ddd" stroke="none" />
            </Icon>
            <Icon size={12} box="0 0 12 12" color="#ddd">
              <path d="M1.5 3.5h6v5h-6zM7.5 5l3-1.500v5l-3-1.500M3 1.500c2-1 4-1 6 0M3 10.500c2 1 4 1 6 0" />
            </Icon>
            <Icon size={12} w={14} box="0 0 14 12" color="#ddd">
              <path d="M1 4.5h2L6 2v8L3 7.500H1zM8 4.500c1 1 1 2 0 3M9.500 3c2 2 2 4 0 6M11.500 1.500c2 3 2 6 0 9" />
            </Icon>
            <Icon size={12} w={18} box="0 0 14 12" color="#bbb">
              <path d="M2 11C2 6 7 1.500 12.500 1.500M5 11c0-3 4-6.500 7.500-6.500M8 11c0-2 2-3.500 4.500-3.500" />
              <circle cx="11.5" cy="10.5" r="1" fill="#ddd" stroke="none" />
            </Icon>
            <Icon size={14} w={12} box="0 0 12 14" color="#fff">
              <ellipse cx="6" cy="7" rx="4.5" ry="6.5" fill="#1287ea" stroke="none" />
              <path d="m4 5 4 4-2 2V3l2 2-4 4" />
            </Icon>
            <Icon size={14} box="0 0 14 14" color="none">
              <path d="M6.5 1 12 3c0 5-1 8-5.500 10C2 11 1 8 1 3z" fill="#f0f0f0" />
              <path d="M6.5 2.500V7H2.300C2 6 2 5 2 4zM6.500 7H11c-.5 2-2 4-4.500 5z" fill="#444" />
              <circle cx="10" cy="10" r="4" fill="#df3a2b" />
              <path d="m8.500 8.500 3 3M11.500 8.500l-3 3" stroke="#fff" />
            </Icon>
          </Tray>
          <Language>ENG</Language>
          <Clock>
            6:13 PM
            <br />
            9/27/2025
          </Clock>
          <Notices aria-label="2 notifications">
            <Icon size={20} box="0 0 20 20" color="none">
              <path d="M1 2h13v11H7l-3 3v-3H1z" fill="#fff" />
              <path d="M3.5 5h8M3.5 7.5h8M3.5 10h5" stroke="#444" />
              <circle cx="13.5" cy="14" r="5.5" fill="#3a3532" stroke="#aaa" />
              <BadgeText x="13.5" y="17">2</BadgeText>
            </Icon>
          </Notices>
        </TaskSide>
      </TaskBar>
    </Window>
  );
}
